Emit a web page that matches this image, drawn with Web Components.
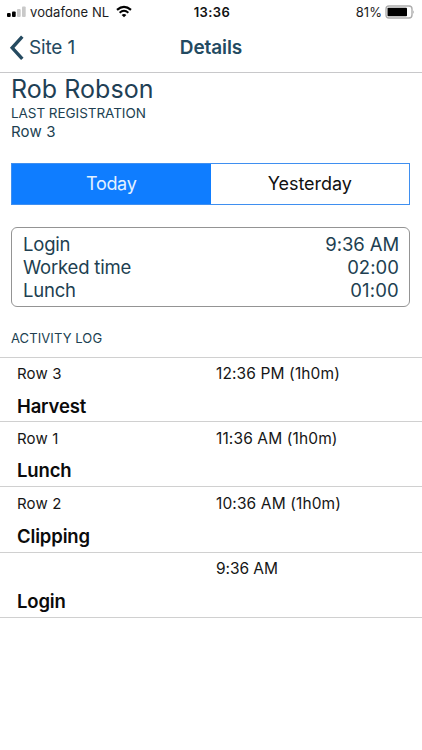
<!DOCTYPE html>
<html lang="en"><head><meta charset="utf-8"><title>Details</title>
<style>
html,body{margin:0;background:#fff}
body{width:422px;height:750px;overflow:hidden;font-family:Inter,"Liberation Sans",sans-serif}
</style></head><body>
<details-screen></details-screen>
<script>
const define=(name,html,setup)=>customElements.define(name,class extends HTMLElement{
  connectedCallback(){
    if(this.shadowRoot)return;
    const t=document.createElement('template');t.innerHTML=html;
    this.attachShadow({mode:'open'}).append(t.content.cloneNode(true));
    if(setup)setup(this);
  }
});

define('status-bar',`<style>
:host{display:grid;grid-template-columns:1fr auto 1fr;align-items:center;height:24px;padding:0 7px;font-size:13px;line-height:24px;color:#1c1c1e;box-sizing:border-box}
.l,.r{display:flex;align-items:center}.r{justify-content:flex-end;letter-spacing:.05px}
.time{font-weight:600;letter-spacing:.42px;color:#111;padding-left:2px}
svg{display:block;flex:none}.wifi{margin-left:7px}.bat{margin-left:3px}.sig{margin-right:4px}
.l span{letter-spacing:.08px}
</style>
<div class="l"><svg class="sig" width="19" height="24" viewBox="0 0 19 24"><rect x="0" y="13" width="3.7" height="4" rx="1" fill="#000"/><rect x="5" y="11.4" width="3.7" height="5.6" rx="1" fill="#000"/><rect x="10" y="9" width="3.7" height="8" rx="1" fill="#c9c9c9"/><rect x="15" y="6.6" width="3.7" height="10.4" rx="1" fill="#c9c9c9"/></svg><span>vodafone NL</span>
<svg class="wifi" width="16" height="24" viewBox="0 0 16 24" fill="none" stroke="#000"><path d="M1 9.9Q8 3.9 15 9.9" stroke-width="2.2"/><path d="M3.6 12.7Q8 8.9 12.4 12.7" stroke-width="1.9"/><path d="M5.6 14.9Q8 12.9 10.4 14.9L8 17.3Z" fill="#000" stroke="none"/></svg></div>
<div class="time">13:36</div>
<div class="r"><span>81%</span><svg class="bat" width="30" height="24" viewBox="0 0 30 24"><rect x="1" y="6" width="26" height="12" rx="3" fill="#fff" stroke="#adadad" stroke-width="1.4"/><rect x="2.5" y="7.7" width="19.5" height="8.6" rx=".8" fill="#000"/><path d="M28.3 10.2Q29.8 12 28.3 14Z" fill="#999"/></svg></div>`);

define('nav-bar',`<style>
:host{display:grid;grid-template-columns:1fr auto 1fr;align-items:center;height:49px;box-sizing:border-box;border-bottom:1px solid #c8c8ca;color:#254a60;font-size:19px;line-height:48px}
.back{display:flex;align-items:center;padding-left:9px;letter-spacing:-.15px}
svg{display:block;margin-right:5px}
.title{font-weight:600;letter-spacing:-.1px;color:#234a61}
</style>
<div class="back"><svg width="15" height="26" viewBox="0 0 15 26"><path d="M13.3 1.7L3.2 12.8L13.3 23.9" fill="none" stroke="#254a60" stroke-width="3.4"/></svg><slot name="back"></slot></div>
<div class="title"><slot></slot></div>`);

define('person-header',`<style>
:host{display:block;padding:1px 11px 0;color:#213f51}
.name{font-size:25px;line-height:30px;letter-spacing:.05px;color:#1f4055}
.cap{font-size:13.5px;line-height:18px;letter-spacing:-.05px}
.place{font-size:15px;line-height:18px;letter-spacing:.15px;padding-top:1px;margin-bottom:-1px}
</style><div class="name"><slot></slot></div><div class="cap"><slot name="caption"></slot></div><div class="place"><slot name="place"></slot></div>`);

define('day-switch',`<style>
:host{display:grid;grid-template-columns:1fr 1fr;margin:23px 12px 0 11px;height:42px;box-sizing:border-box;border:1px solid #3f8ff0;font-size:18px;line-height:40px;text-align:center;color:#111}
.on{background:#0f7dff;color:#e3f1ff;letter-spacing:-.32px}
.off{letter-spacing:-.05px}
</style><div class="on"><slot name="on"></slot></div><div class="off"><slot name="off"></slot></div>`);

define('summary-card',`<style>
:host{display:block;margin:22px 12px 0 11px;height:80px;box-sizing:border-box;border:1px solid #949494;border-radius:6px;padding:5px 10px 0 11px}
</style><slot></slot>`);

define('summary-line',`<style>
:host{display:flex;justify-content:space-between;font-size:18.5px;line-height:23px;color:#213f51}
.k{letter-spacing:var(--k,-.2px)}.v{letter-spacing:var(--v,-.1px)}
</style><span class="k"><slot></slot></span><span class="v"><slot name="value"></slot></span>`);

define('section-title',`<style>
:host{display:block;padding:21px 11px 0;height:50px;box-sizing:border-box;font-size:13px;line-height:20px;color:#213f51;letter-spacing:.09px}
</style><slot></slot>`);

define('log-entry',`<style>
:host{display:block;height:65px;box-sizing:border-box;border-bottom:1px solid #d0d0d0;padding:var(--top,8px) 16px 0 17px;color:#161616}
.top{display:grid;grid-template-columns:199px 1fr;height:18px;font-size:15px;line-height:18px;letter-spacing:.15px}
.time{font-size:15.5px;letter-spacing:var(--t,.12px)}
.task{font-size:18.5px;font-weight:600;line-height:22px;margin-top:var(--gap,12px);letter-spacing:-.15px;color:#0b0b0b}
</style><div class="top"><span><slot name="row"></slot></span><span class="time"><slot name="time"></slot></span></div><div class="task"><slot></slot></div>`);

define('activity-log',`<style>
:host{display:block;border-top:1px solid #d0d0d0}
::slotted(log-entry:first-child){height:64px;--top:7px}
::slotted(log-entry:nth-child(2)){--gap:11px}
::slotted(log-entry:nth-child(3)){height:66px}
::slotted(log-entry:nth-child(4)){--top:7px}
</style><slot></slot>`);

define('details-screen',`<style>:host{display:block;width:422px;height:750px;background:#fff;overflow:hidden}</style>
<status-bar></status-bar>
<nav-bar><span slot="back">Site 1</span>Details</nav-bar>
<person-header>Rob Robson<span slot="caption">LAST REGISTRATION</span><span slot="place">Row 3</span></person-header>
<day-switch><span slot="on">Today</span><span slot="off">Yesterday</span></day-switch>
<summary-card>
<summary-line>Login<span slot="value">9:36 AM</span></summary-line>
<summary-line style="--v:.05px">Worked time<span slot="value">02:00</span></summary-line>
<summary-line style="--v:.2px">Lunch<span slot="value">01:00</span></summary-line>
</summary-card>
<section-title>ACTIVITY LOG</section-title>
<activity-log>
<log-entry><span slot="row">Row 3</span><span slot="time">12:36 PM (1h0m)</span>Harvest</log-entry>
<log-entry><span slot="row">Row 1</span><span slot="time">11:36 AM (1h0m)</span>Lunch</log-entry>
<log-entry><span slot="row">Row 2</span><span slot="time">10:36 AM (1h0m)</span>Clipping</log-entry>
<log-entry style="--t:-.05px"><span slot="time">9:36 AM</span>Login</log-entry>
</activity-log>`);
</script></body></html>
